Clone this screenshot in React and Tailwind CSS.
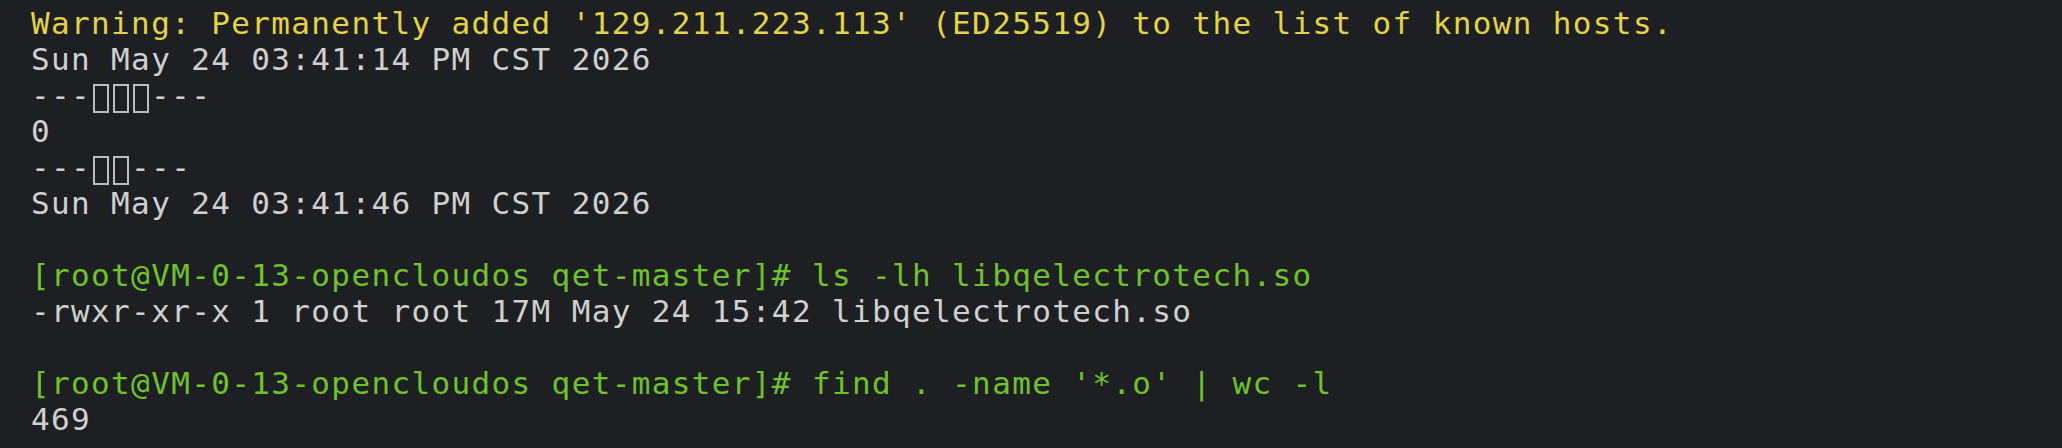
const Tofu = () => (
  <span className="inline-block align-[-7px] w-[16px] h-[29px] mx-[2px] border-2 border-[#bdbdbd]" />
);

const lines = [
  { tone: "yellow", text: "Warning: Permanently added '129.211.223.113' (ED25519) to the list of known hosts." },
  { tone: "gray", text: "Sun May 24 03:41:14 PM CST 2026" },
  { tone: "gray", tofu: 3 },
  { tone: "gray", text: "0" },
  { tone: "gray", tofu: 2 },
  { tone: "gray", text: "Sun May 24 03:41:46 PM CST 2026" },
  { tone: "gray", text: "" },
  { tone: "green", text: "[root@VM-0-13-opencloudos qet-master]# ls -lh libqelectrotech.so" },
  { tone: "gray", text: "-rwxr-xr-x 1 root root 17M May 24 15:42 libqelectrotech.so" },
  { tone: "gray", text: "" },
  { tone: "green", text: "[root@VM-0-13-opencloudos qet-master]# find . -name '*.o' | wc -l" },
  { tone: "gray", text: "469" },
];

const toneClass = {
  yellow: "text-[#e3d348]",
  green: "text-[#6fc22c]",
  gray: "text-[#cfd0d0]",
};

export default function App() {
  return (
    <div className="w-full h-[448px] bg-[#1e1f22] pt-[5px] pl-[31px] overflow-hidden font-['DejaVu_Sans_Mono',monospace] text-[31px] leading-[36px] tracking-[1.36px] whitespace-pre">
      {lines.map((line, i) => (
        <div key={i} className={`h-[36px] ${toneClass[line.tone]}`}>
          {line.tofu ? (
            <>
              ---
              {Array.from({ length: line.tofu }).map((_, j) => (
                <Tofu key={j} />
              ))}
              ---
            </>
          ) : (
            line.text
          )}
        </div>
      ))}
    </div>
  );
}
